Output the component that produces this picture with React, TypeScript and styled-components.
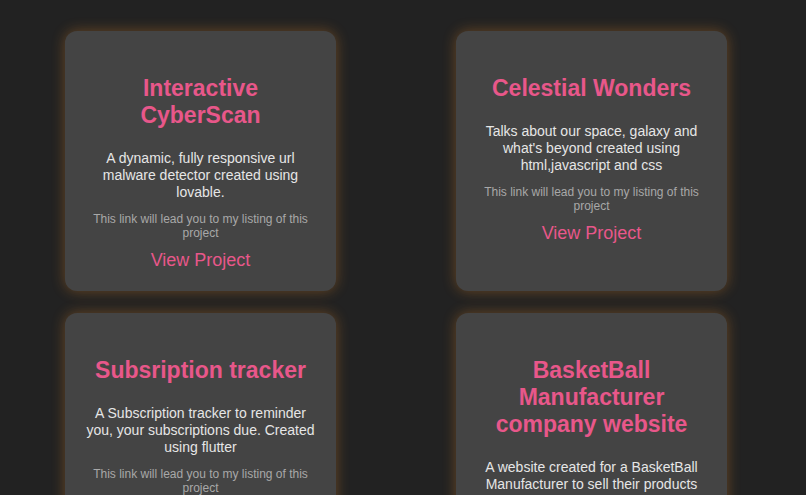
import React from "react";
import styled, { createGlobalStyle } from "styled-components";

const Global = createGlobalStyle`
  html, body { margin: 0; padding: 0; background: #222222; }
  body { font-family: "Liberation Sans", Arial, Helvetica, sans-serif; }
`;

const Page = styled.main`
  min-height: 495px;
  background: #222222;
  box-sizing: border-box;
  padding: 31px 0 40px 65px;
`;

const Grid = styled.section`
  display: grid;
  grid-template-columns: 271px 271px;
  column-gap: 120px;
  row-gap: 22px;
`;

const Card = styled.article`
  background: #444444;
  border-radius: 12px;
  padding: 20px;
  text-align: center;
  box-shadow: 0 0 14px rgba(255, 150, 40, 0.32);
  box-sizing: border-box;
`;

const Title = styled.h2`
  color: #e8578a;
  font-size: 23px;
  line-height: 27px;
  font-weight: 700;
  margin: 24px 0 21px;
`;

const Desc = styled.p`
  color: #e6e6e6;
  font-size: 14px;
  line-height: 17px;
  margin: 0 0 11px;
`;

const Note = styled.p`
  color: #a8a8a8;
  font-size: 12px;
  line-height: 14px;
  margin: 0 0 10px;
`;

const Link = styled.a`
  display: inline-block;
  color: #e8578a;
  font-size: 18px;
  line-height: 21px;
  text-decoration: none;
  cursor: pointer;
`;

const projects = [
  {
    title: "Interactive CyberScan",
    desc: "A dynamic, fully responsive url malware detector created using lovable.",
  },
  {
    title: "Celestial Wonders",
    desc: "Talks about our space, galaxy and what's beyond created using html,javascript and css",
  },
  {
    title: "Subsription tracker",
    desc: "A Subscription tracker to reminder you, your subscriptions due. Created using flutter",
  },
  {
    title: "BasketBall Manufacturer company website",
    desc: "A website created for a BasketBall Manufacturer to sell their products",
  },
];

export default function App() {
  return (
    <>
      <Global />
      <Page>
        <Grid>
          {projects.map((p) => (
            <Card key={p.title}>
              <Title>{p.title}</Title>
              <Desc>{p.desc}</Desc>
              <Note>This link will lead you to my listing of this project</Note>
              <Link>View Project</Link>
            </Card>
          ))}
        </Grid>
      </Page>
    </>
  );
}
